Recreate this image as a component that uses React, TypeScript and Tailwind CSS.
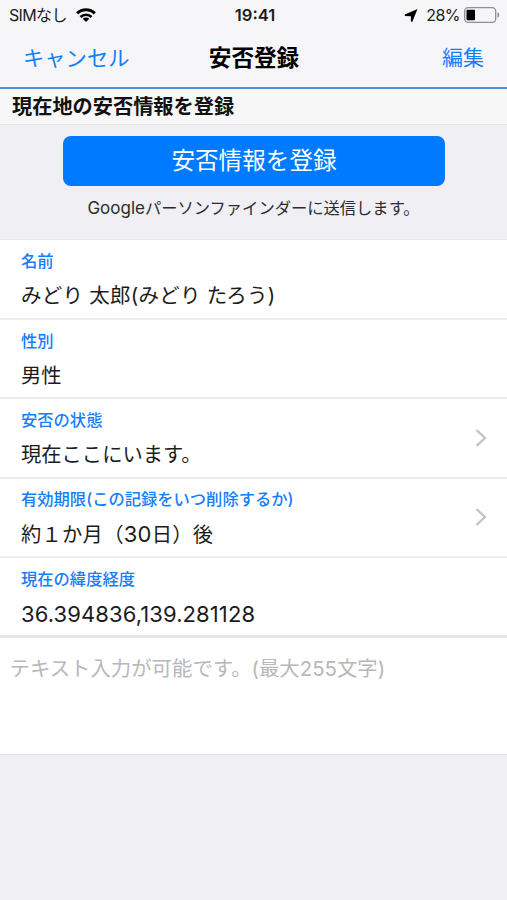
import React from 'react';

interface RowProps {
  label: string;
  value: React.ReactNode;
  link?: boolean;
  valueClassName?: string;
  className?: string;
}

const Row: React.FC<RowProps> = ({
  label,
  value,
  link,
  valueClassName = 'text-[20.3px]',
  className = 'h-[79.5px] border-b-2 border-[#eeeef0]',
}) => {
  return (
    <div className={`flex items-center justify-between bg-white pl-[21px] pr-[20px] ${className}`}>
      <div className="flex flex-col whitespace-nowrap">
        <span className="mt-[3px] text-[16.3px] leading-[24px] font-medium text-[#147efb]">{label}</span>
        <span className={`mt-[8px] leading-[30px] text-[#1c1c1c] ${valueClassName}`}>{value}</span>
      </div>
      {link && (
        <svg width="12" height="18" viewBox="0 0 12 18" fill="none" stroke="#c4c4c8" strokeWidth="2.3">
          <path d="M1.5 1.2 10 9l-8.500 7.800" />
        </svg>
      )}
    </div>
  );
};

const StatusBar: React.FC = () => {
  return (
    <div className="grid h-[30px] grid-cols-3 items-center pl-[9px] pr-[7px] text-[16px] leading-[30px] text-[#1c1c1c]">
      <div className="flex items-center gap-[9px] whitespace-nowrap">
        <span className="w-[58px] tracking-[-0.65px]">SIMなし</span>
        <svg width="20" height="14" viewBox="0 0 20 14" fill="none" stroke="#000" strokeWidth="3">
          <path d="M1.200 5.400a12.500 12.500 0 0 1 17.600 0" />
          <path d="M4.500 9a7.800 7.800 0 0 1 11 0" strokeWidth="2.600" />
          <path d="M10 14 6.700 10.800a4.700 4.700 0 0 1 6.600 0z" fill="#000" stroke="none" />
        </svg>
      </div>
      <span className="pl-px text-center text-[16.6px] font-semibold">19:41</span>
      <div className="flex items-center justify-end whitespace-nowrap">
        <svg className="mr-[8px]" width="14" height="13" viewBox="0 0 14 13">
          <path d="M13.500 0 8.300 12.800H6.900V7.300L.8 7V5.600z" fill="#000" />
        </svg>
        <span className="mr-[4px] tracking-[-0.5px]">28%</span>
        <svg width="36" height="16" viewBox="0 0 36 16">
          <rect x=".7" y=".7" width="31" height="14.600" rx="3.500" fill="none" stroke="#8e8e93" strokeWidth="1.300" />
          <rect x="2.500" y="2.700" width="8.500" height="10.600" rx="1" fill="#000" />
          <path d="M33.500 5.300c2.400 1 2.400 4.400 0 5.400z" fill="#8e8e93" />
        </svg>
      </div>
    </div>
  );
};

const App: React.FC = () => {
  return (
    <div className="flex h-[900px] w-[507px] flex-col overflow-hidden bg-[#efeff4] font-[Inter,'Noto_Sans_CJK_JP',sans-serif]" lang="ja">
      {/* Navigation */}
      <header className="h-[89px] border-b-2 border-[#4a90dc] bg-[#f6f6f8]">
        <StatusBar />
        <div className="grid h-[56px] grid-cols-3 items-center px-[23px] text-[21px] leading-[30px]">
          <button className="text-left text-[21.3px] text-[#147efb]">キャンセル</button>
          <h1 className="pl-px text-center text-[22.6px] font-bold text-black">安否登録</h1>
          <button className="text-right text-[#147efb]">編集</button>
        </div>
      </header>

      <h2 className="h-[36px] border-b border-[#e6e6e9] bg-[#f7f7f7] pl-[12px] text-[20.2px] leading-[36px] font-bold text-[#111]">
        現在地の安否情報を登録
      </h2>

      {/* Register action */}
      <section className="flex h-[115px] flex-col items-center border-b border-[#e6e6e9] pt-[11px]">
        <button className="h-[50px] w-[382px] rounded-[8px] bg-[#007aff] pl-px text-[23.6px] leading-[50px] text-white">
          安否情報を登録
        </button>
        <p className="mt-[9px] text-[16.3px] leading-[26px] text-[#2c2c2e]">
          <span className="text-[17px]">Google</span>パーソンファインダーに送信します。
        </p>
      </section>

      {/* Details */}
      <Row label="名前" value="みどり 太郎(みどり たろう)" valueClassName="text-[20.5px] tracking-[0.25px]" />
      <Row label="性別" value="男性" />
      <Row label="安否の状態" value="現在ここにいます。" link />
      <Row
        label="有効期限(この記録をいつ削除するか)"
        value={<>約１か月（<span className="text-[22px]">30</span>日）後</>}
        valueClassName="text-[20.3px] tracking-[0.25px]"
        link
      />
      <Row
        label="現在の緯度経度"
        value="36.394836,139.281128"
        valueClassName="text-[22px] tracking-[0.1px]"
        className="h-[80px] border-b-3 border-[#e6e6e8]"
      />

      <textarea
        className="h-[117px] shrink-0 resize-none border-b border-[#e2e2e6] bg-white px-[9.5px] pt-[16px] text-[20.4px] leading-[30px] placeholder:text-[#b8b8b8]"
        placeholder="テキスト入力が可能です。(最大255文字)"
      />
    </div>
  );
};

export default App;
